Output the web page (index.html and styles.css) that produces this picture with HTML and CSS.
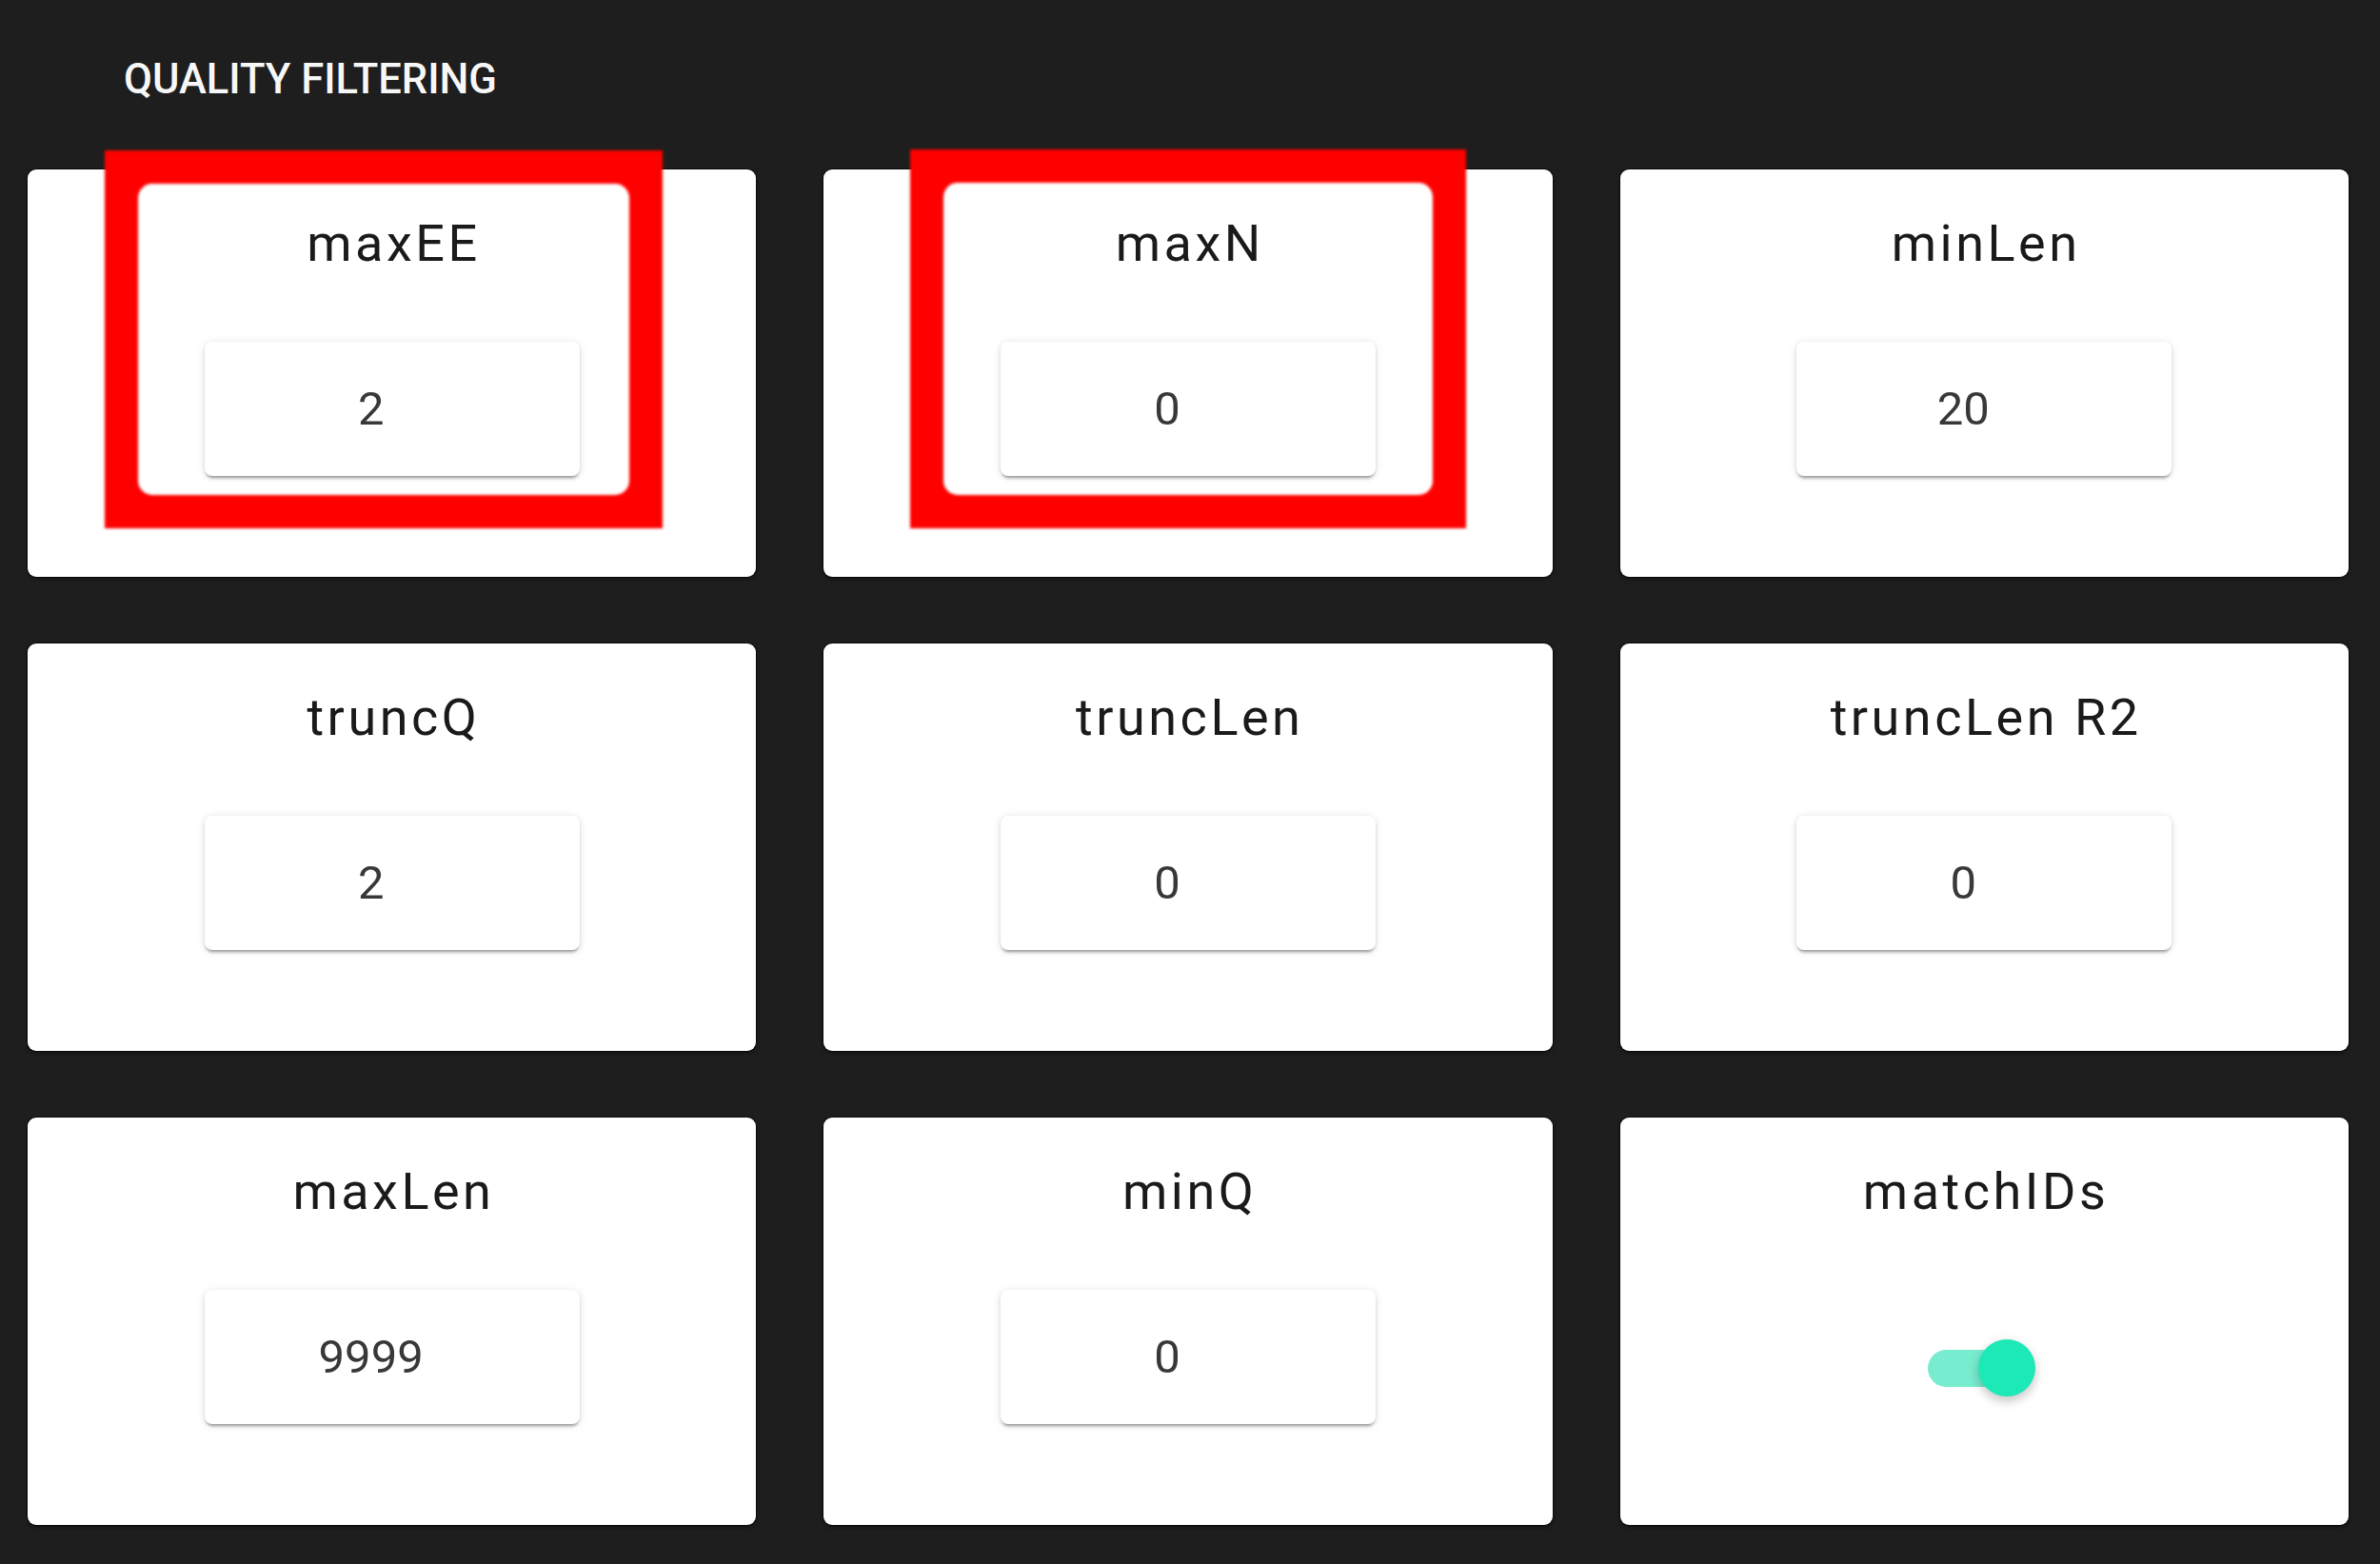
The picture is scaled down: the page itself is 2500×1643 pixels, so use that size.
FILE: index.html
```html
<!DOCTYPE html>
<html lang="en">
<head>
<meta charset="utf-8">
<title>Quality filtering</title>
<link rel="stylesheet" href="styles.css">
</head>
<body>
<div class="page">
  <h2 class="section-title">QUALITY FILTERING</h2>
  <div class="grid">
    <div class="card">
      <div class="label">maxEE</div>
      <input class="field" type="text" value="2" readonly>
      <div class="highlight hl-a"></div>
    </div>
    <div class="card">
      <div class="label">maxN</div>
      <input class="field" type="text" value="0" readonly>
      <div class="highlight hl-b"></div>
    </div>
    <div class="card">
      <div class="label">minLen</div>
      <input class="field" type="text" value="20" readonly>
    </div>
    <div class="card">
      <div class="label">truncQ</div>
      <input class="field" type="text" value="2" readonly>
    </div>
    <div class="card">
      <div class="label">truncLen</div>
      <input class="field" type="text" value="0" readonly>
    </div>
    <div class="card">
      <div class="label">truncLen R2</div>
      <input class="field" type="text" value="0" readonly>
    </div>
    <div class="card">
      <div class="label">maxLen</div>
      <input class="field" type="text" value="9999" readonly>
    </div>
    <div class="card">
      <div class="label">minQ</div>
      <input class="field" type="text" value="0" readonly>
    </div>
    <div class="card">
      <div class="label">matchIDs</div>
      <div class="switch" role="switch" aria-checked="true">
        <div class="switch-track"></div>
        <div class="switch-thumb"></div>
      </div>
    </div>
  </div>
</div>
</body>
</html>
```

FILE: styles.css
```css
html, body {
  margin: 0;
  padding: 0;
}

body {
  background: #1e1e1e;
  font-family: Roboto, "Noto Sans", "Liberation Sans", sans-serif;
  width: 2500px;
  height: 1643px;
  overflow: hidden;
}

.page {
  padding: 59px 33px 0 29px;
}

.section-title {
  margin: 0 0 0 101px;
  font-family: Roboto, "Liberation Sans", sans-serif;
  font-weight: 500;
  font-size: 43.5px;
  line-height: 50px;
  color: #f7f7f7;
  letter-spacing: 0;
}

.grid {
  margin-top: 69px;
  width: 2438px;
  display: grid;
  grid-template-columns: repeat(3, 1fr);
  grid-auto-rows: 428px;
  column-gap: 71px;
  row-gap: 70px;
}

.card {
  position: relative;
  background: #ffffff;
  border-radius: 9px;
  display: flex;
  flex-direction: column;
  align-items: center;
  padding-top: 46px;
  box-sizing: border-box;
  box-shadow: 0 0 0 1px rgba(0, 0, 0, 0.55), 0 2px 4px rgba(0, 0, 0, 0.45);
}

.label {
  font-size: 54px;
  line-height: 64px;
  font-weight: 400;
  letter-spacing: 3.5px;
  padding-left: 3.5px;
  color: #1a1a1a;
  white-space: nowrap;
}

.field {
  margin-top: 71px;
  width: 394px;
  height: 141px;
  box-sizing: border-box;
  border: 0;
  border-radius: 8px;
  padding: 0 44px 0 0;
  background: #ffffff;
  text-align: center;
  font-family: Roboto, "Liberation Sans", sans-serif;
  font-size: 49px;
  font-weight: 400;
  color: #383838;
  outline: none;
  box-shadow: 0 4px 3px -2px rgba(0, 0, 0, 0.3), 0 2px 4px 0 rgba(0, 0, 0, 0.1), 0 1px 10px 0 rgba(0, 0, 0, 0.1);
}

.switch {
  position: relative;
  margin-top: 123px;
  margin-right: 5px;
  width: 113px;
  height: 60px;
  display: flex;
  align-items: center;
}

.switch-track {
  width: 104px;
  height: 39px;
  border-radius: 20px;
  background: #78eccf;
}

.switch-thumb {
  position: absolute;
  right: 0;
  top: 0;
  width: 60px;
  height: 60px;
  border-radius: 50%;
  background: #1de9b6;
  box-shadow: 0 6px 10px rgba(0, 0, 0, 0.14), 0 2px 14px rgba(0, 0, 0, 0.1);
}

/* red annotation boxes drawn over the cards */
.highlight {
  position: absolute;
  box-sizing: border-box;
  border: 35px solid #ff0000;
  filter: blur(1.5px);
  pointer-events: none;
}

.highlight::before {
  content: "";
  position: absolute;
  inset: 0;
  border-radius: 15px;
  box-shadow: 0 0 0 12px #ff0000;
}

.hl-a {
  left: 81px;
  top: -20px;
  width: 586px;
  height: 397px;
}

.hl-b {
  left: 91px;
  top: -21px;
  width: 584px;
  height: 398px;
}
```
